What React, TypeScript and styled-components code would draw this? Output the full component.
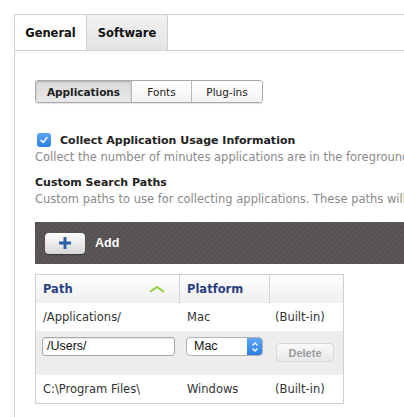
import React from 'react';
import styled, { createGlobalStyle } from 'styled-components';

const GlobalStyle = createGlobalStyle`
  html, body {
    margin: 0;
    padding: 0;
    background: #fff;
    overflow: hidden;
  }
  body {
    font-family: "DejaVu Sans", "Liberation Sans", sans-serif;
    color: #222;
  }
`;

const Page = styled.div`
  display: flex;
  flex-direction: column;
  padding: 14px 0 0 14px;
  height: 417px;
  box-sizing: border-box;
  overflow: hidden;
`;

const TabBar = styled.div`
  display: flex;
  height: 35px;
  flex-shrink: 0;
  border-top: 1px solid #cfcfcf;
  border-left: 1px solid #cfcfcf;
  border-bottom: 1px solid #cfcfcf;
`;

const Tab = styled.div<{ $w: number; $active?: boolean }>`
  width: ${(p) => p.$w}px;
  display: flex;
  align-items: center;
  justify-content: center;
  font-size: 11.5px;
  font-weight: bold;
  color: #111;
  border-right: 1px solid #cfcfcf;
  background: ${(p) => (p.$active ? '#fff' : 'linear-gradient(#f2f2f2, #e3e3e3)')};
`;

const Panel = styled.div`
  flex: 1;
  border-left: 1px solid #cfcfcf;
  padding: 29px 0 0 20px;
  overflow: hidden;
`;

const Segmented = styled.div`
  display: inline-flex;
  height: 21px;
  border: 1px solid #a9a9a9;
  border-radius: 3px;
  overflow: hidden;
  box-shadow: 0 1px 1px rgba(0, 0, 0, 0.12);
`;

const Segment = styled.div<{ $active?: boolean; $w: number }>`
  width: ${(p) => p.$w}px;
  display: flex;
  align-items: center;
  justify-content: center;
  font-size: 10.5px;
  font-weight: ${(p) => (p.$active ? 'bold' : 'normal')};
  color: #222;
  border-left: 1px solid #b9b9b9;
  background: ${(p) => (p.$active ? 'linear-gradient(#d9d9d9, #e9e9e9)' : 'linear-gradient(#ffffff, #f3f3f3)')};
  box-shadow: ${(p) => (p.$active ? 'inset 0 1px 2px rgba(0,0,0,0.2)' : 'none')};
  &:first-child {
    border-left: none;
  }
`;

const CheckRow = styled.div`
  display: flex;
  align-items: center;
  margin-top: 30px;
  gap: 9px;
`;

const Check = styled.div`
  width: 14px;
  height: 14px;
  border-radius: 3px;
  background: linear-gradient(#5aa7f5, #2a7ee8);
  display: flex;
  align-items: center;
  justify-content: center;
  margin-left: 2px;
`;

const Label = styled.div`
  font-size: 11px;
  font-weight: bold;
  color: #222;
  white-space: nowrap;
`;

const Desc = styled.div`
  font-size: 11.5px;
  color: #8a8a8a;
  white-space: nowrap;
  margin-top: 3px;
`;

const Heading = styled(Label)`
  margin-top: 12px;
`;

const AddBar = styled.div`
  margin-top: 16px;
  height: 42px;
  display: flex;
  align-items: center;
  padding-left: 10px;
  gap: 10px;
  background: repeating-linear-gradient(
    135deg,
    #5b5857 0px,
    #5b5857 2px,
    #545150 2px,
    #545150 4px
  );
`;

const PlusButton = styled.div`
  width: 40px;
  height: 21px;
  border-radius: 4px;
  background: linear-gradient(#ffffff, #d6d6d6);
  display: flex;
  align-items: center;
  justify-content: center;
  box-shadow: 0 1px 1px rgba(0, 0, 0, 0.4);
`;

const AddText = styled.span`
  font-size: 12.5px;
  font-weight: bold;
  color: #fff;
  font-family: "Liberation Sans", sans-serif;
`;

const Table = styled.div`
  margin-top: 10px;
  width: 307px;
  border: 1px solid #cfcfcf;
`;

const Row = styled.div<{ $bg?: string; $h: number }>`
  display: grid;
  grid-template-columns: 144px 90px 1fr;
  height: ${(p) => p.$h}px;
  align-items: center;
  background: ${(p) => p.$bg || '#fff'};
`;

const HeadRow = styled(Row)`
  align-items: stretch;
  background: linear-gradient(#ffffff, #efefef);
`;

const HeadCell = styled.div<{ $last?: boolean }>`
  display: flex;
  align-items: center;
  justify-content: space-between;
  padding: 0 14px 0 7px;
  font-size: 11.5px;
  font-weight: bold;
  color: #2b3f80;
  border-right: ${(p) => (p.$last ? 'none' : '1px solid #d4d4d4')};
`;

const Cell = styled.div<{ $pl?: number }>`
  padding-left: ${(p) => p.$pl ?? 7}px;
  font-size: 11.5px;
  color: #333;
  white-space: nowrap;
`;

const TextInput = styled.div`
  margin-left: 6px;
  width: 133px;
  height: 19px;
  box-sizing: border-box;
  border: 1px solid #aaa;
  border-radius: 3px;
  background: #fff;
  font-family: "Liberation Sans", sans-serif;
  font-size: 12.5px;
  padding-left: 4px;
  line-height: 17px;
  color: #111;
  box-shadow: inset 0 1px 1px rgba(0, 0, 0, 0.1);
`;

const Select = styled.div`
  margin-left: 6px;
  width: 77px;
  height: 19px;
  box-sizing: border-box;
  border: 1px solid #b3b3b3;
  border-radius: 4px;
  background: #fff;
  display: flex;
  overflow: hidden;
  font-family: "Liberation Sans", sans-serif;
  font-size: 12.5px;
  color: #111;
`;

const SelectText = styled.div`
  flex: 1;
  padding-left: 7px;
  line-height: 17px;
`;

const SelectArrow = styled.div`
  width: 15px;
  background: linear-gradient(#5ea8f6, #2a7de6);
  display: flex;
  align-items: center;
  justify-content: center;
`;

const DeleteButton = styled.div`
  margin: 6px 0 0 6px;
  width: 58px;
  height: 19px;
  border-radius: 4px;
  border: 1px solid #d6d6d6;
  box-sizing: border-box;
  background: linear-gradient(#fafafa, #e8e8e8);
  display: flex;
  align-items: center;
  justify-content: center;
  font-family: "Liberation Sans", sans-serif;
  font-size: 11px;
  font-weight: bold;
  color: #9a9a9a;
`;

const EditCell = styled.div`
  align-self: start;
  padding-top: 6px;
`;

export default function App() {
  return (
    <>
      <GlobalStyle />
      <Page>
        <TabBar>
          <Tab $active $w={71}>General</Tab>
          <Tab $w={80}>Software</Tab>
        </TabBar>
        <Panel>
          <Segmented>
            <Segment $active $w={95}>Applications</Segment>
            <Segment $w={59}>Fonts</Segment>
            <Segment $w={70}>Plug-ins</Segment>
          </Segmented>

          <CheckRow>
            <Check>
              <svg width="10" height="10" viewBox="0 0 10 10">
                <path d="M2 5.2 L4.2 7.4 L8 2.6" fill="none" stroke="#fff" strokeWidth="1.6" strokeLinecap="round" strokeLinejoin="round" />
              </svg>
            </Check>
            <Label>Collect Application Usage Information</Label>
          </CheckRow>
          <Desc>Collect the number of minutes applications are in the foreground</Desc>
          <Heading>Custom Search Paths</Heading>
          <Desc>Custom paths to use for collecting applications. These paths will be searched</Desc>

          <AddBar>
            <PlusButton>
              <svg width="14" height="14" viewBox="0 0 14 14">
                <path d="M7 1 V13 M1 7 H13" stroke="#2d5fa8" strokeWidth="3" />
              </svg>
            </PlusButton>
            <AddText>Add</AddText>
          </AddBar>

          <Table>
            <HeadRow $h={28}>
              <HeadCell>
                Path
                <svg width="16" height="8" viewBox="0 0 16 8">
                  <path d="M1 7 L8 2 L15 7" fill="none" stroke="#8fcf3a" strokeWidth="2" />
                </svg>
              </HeadCell>
              <HeadCell>Platform</HeadCell>
              <HeadCell $last />
            </HeadRow>
            <Row $h={28}>
              <Cell>/Applications/</Cell>
              <Cell>Mac</Cell>
              <Cell $pl={5}>(Built-in)</Cell>
            </Row>
            <Row $h={44} $bg="#ededed">
              <EditCell>
                <TextInput>/Users/</TextInput>
              </EditCell>
              <EditCell>
                <Select>
                  <SelectText>Mac</SelectText>
                  <SelectArrow>
                    <svg width="8" height="12" viewBox="0 0 8 12">
                      <path d="M1.5 4.5 L4 2 L6.5 4.5 M1.5 7.5 L4 10 L6.5 7.5" fill="none" stroke="#fff" strokeWidth="1.3" />
                    </svg>
                  </SelectArrow>
                </Select>
              </EditCell>
              <EditCell>
                <DeleteButton>Delete</DeleteButton>
              </EditCell>
            </Row>
            <Row $h={28}>
              <Cell>C:\Program Files\</Cell>
              <Cell>Windows</Cell>
              <Cell $pl={5}>(Built-in)</Cell>
            </Row>
          </Table>
        </Panel>
      </Page>
    </>
  );
}
